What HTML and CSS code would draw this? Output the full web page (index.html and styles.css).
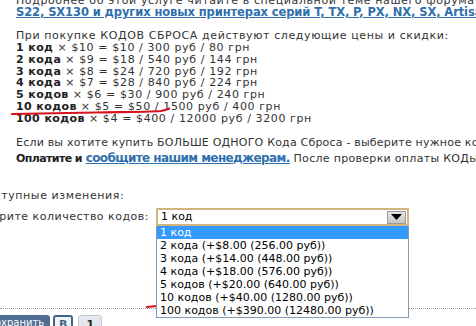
FILE: index.html
```html
<!DOCTYPE html>
<html lang="ru">
<head>
<meta charset="utf-8">
<link rel="stylesheet" href="styles.css">
</head>
<body>
<div class="page">
  <div class="info">
    <p class="line">Подробнее об этой услуге читайте в специальной теме нашего форума по СНПЧ для Epson</p>
    <p class="line"><a class="biglink" href="#">S22, SX130 и других новых принтерах серий T, TX, P, PX, NX, SX, Artisan</a></p>
    <p class="line blank"></p>
    <p class="line">При покупке КОДОВ СБРОСА действуют следующие цены и скидки:</p>
    <p class="line"><b>1 код</b> × $10 = $10 / 300 руб / 80 грн</p>
    <p class="line"><b>2 кода</b> × $9 = $18 / 540 руб / 144 грн</p>
    <p class="line"><b>3 кода</b> × $8 = $24 / 720 руб / 192 грн</p>
    <p class="line"><b>4 кода</b> × $7 = $28 / 840 руб / 224 грн</p>
    <p class="line"><b>5 кодов</b> × $6 = $30 / 900 руб / 240 грн</p>
    <p class="line"><b>10 кодов</b> × $5 = $50 / 1500 руб / 400 грн</p>
    <p class="line"><b>100 кодов</b> × $4 = $400 / 12000 руб / 3200 грн</p>
    <p class="line blank wide"></p>
    <p class="line narrow">Если вы хотите купить БОЛЬШЕ ОДНОГО Кода Сброса - выберите нужное количество</p>
    <p class="line tall"><b class="pay">Оплатите и</b> <a class="mlink" href="#">сообщите нашим менеджерам.</a> После проверки оплаты КОДы будут</p>
  </div>

  <div class="options">
    <div class="opt-title">Доступные изменения:</div>
    <div class="opt-row">
      <div class="opt-label"><span>Выберите количество кодов:</span></div>
      <div class="select">
        <div class="select-box">
          <span class="select-value">1 код</span>
          <span class="select-btn"><svg width="11" height="6" viewBox="0 0 11 6"><path d="M0 0h11L5.5 6z" fill="#000"/></svg></span>
        </div>
        <ul class="dropdown">
          <li class="sel">1 код</li>
          <li>2 кода (+$8.00 (256.00 руб))</li>
          <li>3 кода (+$14.00 (448.00 руб))</li>
          <li>4 кода (+$18.00 (576.00 руб))</li>
          <li>5 кодов (+$20.00 (640.00 руб))</li>
          <li>10 кодов (+$40.00 (1280.00 руб))</li>
          <li>100 кодов (+$390.00 (12480.00 руб))</li>
        </ul>
      </div>
    </div>
  </div>

  <div class="divider"></div>

  <div class="toolbar">
    <span class="save">Сохранить</span>
    <span class="bicon">B</span>
    <span class="tab">1</span>
  </div>

  <svg class="mark mark1" width="160" height="12" viewBox="0 0 160 12"><path d="M1 8 C25 7.5 55 7 85 6.5 C110 6 135 6 150 5 C153 4.5 156 3.5 158 2.5" stroke="#d6141c" stroke-width="2.2" fill="none" stroke-linecap="round"/></svg>
  <svg class="mark mark2" width="140" height="10" viewBox="0 0 140 10"><path d="M1 8 C20 6 45 5 80 4.5 C105 4 120 3.5 133 2.5" stroke="#d6141c" stroke-width="2.2" fill="none" stroke-linecap="round"/></svg>
</div>
</body>
</html>
```

FILE: styles.css
```css
html, body {
  margin: 0;
  padding: 0;
  background: #fff;
  overflow: hidden;
}
body {
  width: 476px;
  height: 326px;
  font-family: "DejaVu Sans", Verdana, sans-serif;
  font-size: 11px;
  letter-spacing: 0.6px;
  color: #333;
}
.page {
  position: relative;
  height: 326px;
  overflow: hidden;
}
.info {
  margin-top: -5px;
  padding-left: 16px;
  white-space: nowrap;
}
.line {
  margin: 0;
  line-height: 11.75px;
  height: 11.75px;
}
.line.wide {
  height: 13px;
}
.line.narrow {
  letter-spacing: 0.2px;
}
.line b {
  color: #222;
  letter-spacing: 0.4px;
}
.biglink {
  font-weight: bold;
  font-size: 11.5px;
  letter-spacing: -0.1px;
  color: #2f6fad;
  text-decoration: underline;
}
.tall {
  height: 14px;
  line-height: 14px;
  margin-top: 2px;
  letter-spacing: 0.3px;
}
.pay {
  font-size: 11px;
  letter-spacing: -0.6px !important;
}
.mlink {
  font-size: 12px;
  font-weight: bold;
  color: #2f6fad;
  text-decoration: underline;
  letter-spacing: -0.6px;
}
.options {
  margin-top: 25px;
  white-space: nowrap;
}
.opt-title {
  margin-left: -22px;
  line-height: 12px;
  height: 12px;
}
.opt-row {
  display: flex;
  align-items: center;
  margin-top: 6px;
  letter-spacing: 0.5px;
}
.opt-label {
  display: flex;
  justify-content: flex-end;
  width: 149px;
  margin-right: 7px;
  line-height: 12px;
}
.select {
  position: relative;
  width: 253px;
  font-size: 11px;
  letter-spacing: 0;
}
.select-box {
  display: flex;
  align-items: center;
  justify-content: space-between;
  height: 14px;
  border: 2px solid #d2b57e;
  border-radius: 1px;
  background: #fff;
  color: #000;
  padding-left: 3px;
}
.select-value {
  line-height: 14px;
}
.select-btn {
  display: flex;
  align-items: center;
  justify-content: center;
  width: 19px;
  height: 13px;
  background: linear-gradient(#e6e6e6, #c4c4c4);
  border: 1px solid #9a9a9a;
  box-sizing: border-box;
  margin-right: 1px;
}
.dropdown {
  position: absolute;
  left: 0;
  top: 18px;
  width: 253px;
  box-sizing: border-box;
  margin: 0;
  padding: 0;
  list-style: none;
  border: 1px solid #7f9db9;
  border-top: none;
  background: #fff;
  color: #000;
  z-index: 2;
}
.dropdown li {
  height: 13px;
  line-height: 13px;
  padding-left: 3px;
}
.dropdown li.sel {
  background: #3399ff;
  color: #fff;
}
.divider {
  margin-top: 82px;
  border-top: 1px dotted #999;
  width: 476px;
}
.toolbar {
  display: flex;
  align-items: flex-start;
  gap: 3px;
  margin-top: 6px;
  margin-left: -20px;
  letter-spacing: 0;
}
.save {
  background: #4f6d90;
  color: #fff;
  height: 14px;
  padding: 2px 6px 0 8px;
  border-radius: 3px 3px 0 0;
  font-size: 10px;
}
.bicon {
  width: 16px;
  height: 14px;
  border: 2px solid #44648a;
  border-radius: 3px;
  background: #eef2f7;
  color: #44648a;
  font-weight: bold;
  font-size: 11px;
  text-align: center;
  line-height: 15px;
  box-sizing: content-box;
}
.tab {
  width: 22px;
  height: 16px;
  margin-left: 2px;
  background: #e4e8ee;
  border: 1px solid #c3c9d2;
  border-radius: 3px 3px 0 0;
  text-align: center;
  font-weight: bold;
  font-size: 11px;
  color: #222;
  line-height: 18px;
}
.mark {
  position: absolute;
  pointer-events: none;
}
.mark1 {
  left: 11px;
  top: 106px;
}
.mark2 {
  left: 146px;
  top: 299px;
}
```
